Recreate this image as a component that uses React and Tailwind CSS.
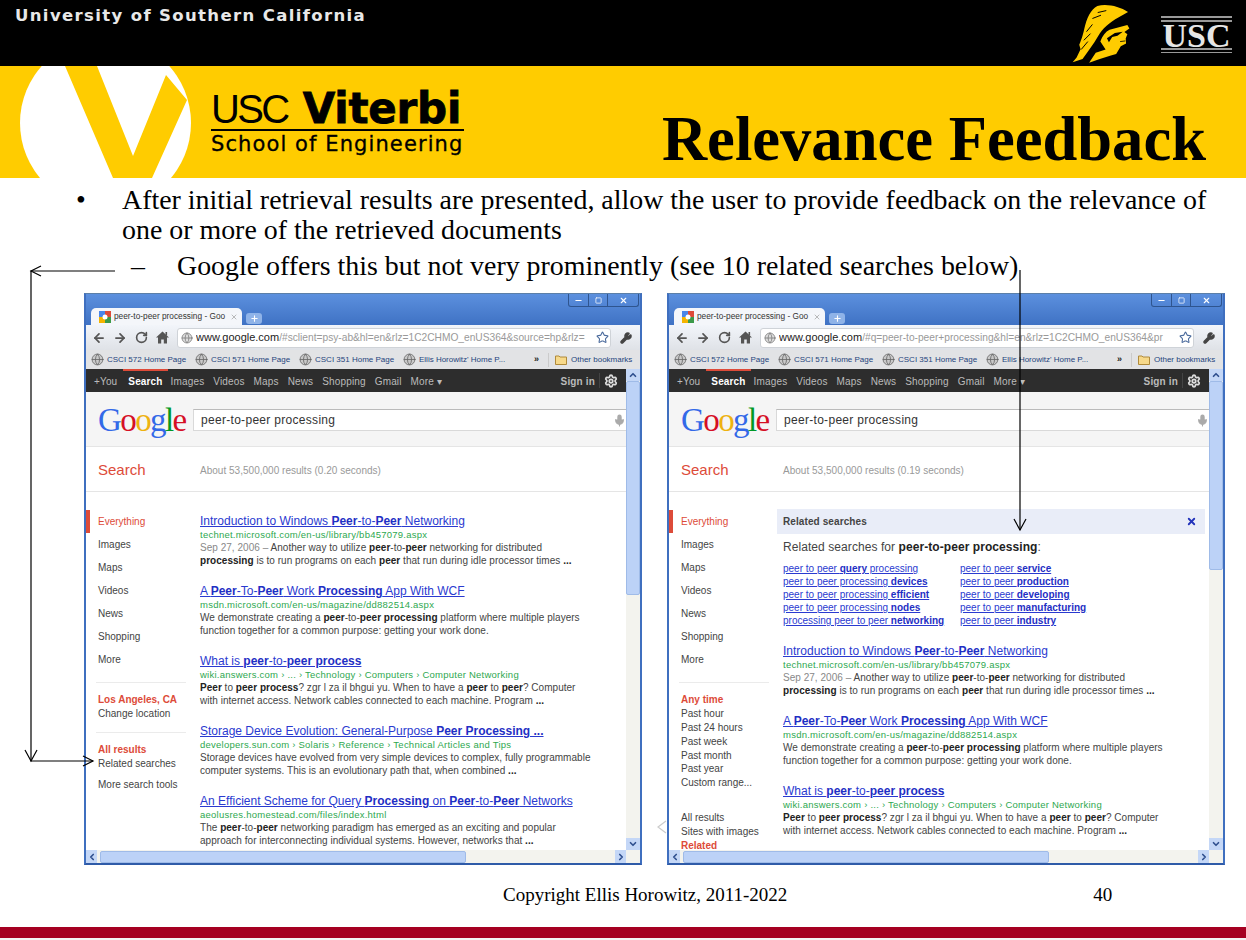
import { ArrowLeft, ArrowRight, RotateCw, Star, Wrench, Settings, Mic, ChevronLeft, ChevronRight, ChevronUp, ChevronDown, X, Minus, Plus, Square, Globe } from 'lucide-react'

function B({ children, c = 'text-[#222]' }) {
    return <b className={`font-bold ${c}`}>{children}</b>
}

function T({ children }) {
    return <b className="font-bold text-[#1f2fc4]">{children}</b>
}

function Result({ title, url, date, line1, line2 }) {
    return (
        <div className="mb-[17px] w-[420px] whitespace-nowrap">
            <div className="h-[14px] text-[12px] leading-[14px] text-[#2a3ad0] underline">{title}</div>
            <div className="h-[13px] text-[9.5px] leading-[13px] tracking-[0.24px] text-[#2ea84f]">{url}</div>
            <div className="h-[13px] text-[10px] leading-[13px] tracking-[0.03px] text-[#444]">
                {date && <span className="text-[#888]">{date} – </span>}
                {line1}
            </div>
            <div className="h-[13px] text-[10px] leading-[13px] tracking-[0.03px] text-[#444]">{line2}</div>
        </div>
    )
}

const intro = (
    <Result
        title={<>Introduction to Windows <T>Peer</T>-to-<T>Peer</T> Networking</>}
        url="technet.microsoft.com/en-us/library/bb457079.aspx"
        date="Sep 27, 2006"
        line1={<>Another way to utilize <B>peer</B>-to-<B>peer</B> networking for distributed</>}
        line2={<><B>processing</B> is to run programs on each <B>peer</B> that run during idle processor times <B>...</B></>}
    />
)

const wcf = (
    <Result
        title={<>A <T>Peer</T>-To-<T>Peer</T> Work <T>Processing</T> App With WCF</>}
        url="msdn.microsoft.com/en-us/magazine/dd882514.aspx"
        line1={<>We demonstrate creating a <B>peer</B>-to-<B>peer processing</B> platform where multiple players</>}
        line2="function together for a common purpose: getting your work done."
    />
)

const whatIs = (
    <Result
        title={<>What is <T>peer</T>-to-<T>peer process</T></>}
        url="wiki.answers.com › ... › Technology › Computers › Computer Networking"
        line1={<><B>Peer</B> to <B>peer process</B>? zgr l za il bhgui yu. When to have a <B>peer</B> to <B>peer</B>? Computer</>}
        line2={<>with internet access. Network cables connected to each machine. Program <B>...</B></>}
    />
)

function NavItem({ children, active }) {
    return (
        <div className={`h-[23px] text-[10px] leading-[23px] ${active ? 'border-l-4 border-[#dd4b39] pl-[8px] text-[#dd4b39]' : 'pl-[12px] text-[#444]'}`}>
            {children}
        </div>
    )
}

function Side({ children, red, className = '' }) {
    return (
        <div className={`h-[13.9px] pl-[12px] text-[10px] leading-[14px] whitespace-nowrap ${red ? 'font-bold text-[#dd4b39]' : 'text-[#444]'} ${className}`}>
            {children}
        </div>
    )
}

function Divider() {
    return <div className="mt-[11px] mb-[10px] ml-[10px] h-px w-[90px] bg-[#ebebeb]" />
}

function Bookmark({ label, className }) {
    return (
        <div className={`flex items-center gap-[3px] whitespace-nowrap ${className}`}>
            <Globe size={13} className="shrink-0 text-[#666]" fill="#c9c9c9" strokeWidth={1.5} />
            <span>{label}</span>
        </div>
    )
}

function Browser({ url, rest, time, sidebar, thumb, children }) {
    return (
        <div className="flex h-[572px] w-[558px] flex-col border-x-2 border-b-2 border-t border-x-[#3f6fbf] border-b-[#2f5ba8] border-t-[#5b7fa8] bg-white">
            <div className="flex h-[31px] shrink-0 flex-col bg-gradient-to-b from-[#5c90de] to-[#3f72c4]">
                <div className="flex h-[13px] justify-end pr-[1px]">
                    <div className="flex h-[13px] w-[71px] rounded-b-[3px] border-x border-b border-[#2f558f] text-white">
                        <div className="flex w-[20px] items-center justify-center border-r border-[#2f558f]"><Minus size={9} strokeWidth={3} /></div>
                        <div className="flex w-[19px] items-center justify-center border-r border-[#2f558f]"><Square size={7} strokeWidth={2.5} /></div>
                        <div className="flex flex-1 items-center justify-center"><X size={9} strokeWidth={3} /></div>
                    </div>
                </div>
                <div className="flex h-[18px] items-end pl-[5px]">
                    <div className="flex h-[17px] w-[151px] items-center gap-[3px] rounded-t-[5px] bg-[#f4f6fa] pl-[8px] pr-[4px] text-[8.3px] whitespace-nowrap text-[#333]">
                        <svg width="12" height="12" viewBox="0 0 12 12" className="shrink-0">
                            <rect width="6" height="6" fill="#4a86e8" />
                            <rect x="6" width="6" height="6" fill="#dd4b39" />
                            <rect y="6" width="6" height="6" fill="#f4b400" />
                            <rect x="6" y="6" width="6" height="6" fill="#3c9a4a" />
                            <circle cx="6" cy="6" r="2.5" fill="#fff" />
                        </svg>
                        <span className="flex-1">peer-to-peer processing - Goo</span>
                        <X size={8} className="shrink-0 text-[#999]" />
                    </div>
                    <div className="mb-[1px] ml-[4px] flex h-[11px] w-[16px] items-center justify-center rounded-[3px] bg-[#8fb3e8] text-white">
                        <Plus size={9} strokeWidth={3} />
                    </div>
                </div>
            </div>

            <div className="flex h-[25px] shrink-0 items-center bg-gradient-to-b from-[#f2f5fa] to-[#dfe2e7] pl-[6px] text-[#555]">
                <ArrowLeft size={14} strokeWidth={3} />
                <ArrowRight size={14} strokeWidth={3} className="ml-[7px]" />
                <RotateCw size={13} strokeWidth={3} className="ml-[8px]" />
                <svg width="13" height="13" viewBox="0 0 13 13" className="ml-[8px] shrink-0" fill="#555">
                    <path d="M6.5 0.5 L13 6.5 L11 6.5 L11 12.5 L7.8 12.5 L7.8 8.5 L5.2 8.5 L5.2 12.5 L2 12.5 L2 6.5 L0 6.5 Z" />
                    <rect x="9.5" y="1" width="1.6" height="3.5" />
                </svg>
                <div className="ml-[8px] flex h-[20px] w-[434px] items-center rounded-[3px] border border-[#cfd3d8] bg-white pl-[3px] pr-[1px]">
                    <Globe size={12} className="shrink-0 text-[#777]" fill="#ddd" strokeWidth={1.5} />
                    <div className="ml-[3px] flex-1 overflow-hidden text-[10.2px] whitespace-nowrap text-[#999]">
                        <span className="text-[11px] text-[#222]">{url}</span>{rest}
                    </div>
                    <Star size={13} className="shrink-0 text-[#4a6a9c]" strokeWidth={2} />
                </div>
                <Wrench size={12} strokeWidth={3} fill="#444" className="ml-[9px] text-[#444]" />
            </div>

            <div className="flex h-[19px] shrink-0 items-center bg-[#e2e3e5] text-[8px] text-[#24437c]">
                <Bookmark label="CSCI 572 Home Page" className="ml-[5px] w-[104px]" />
                <Bookmark label="CSCI 571 Home Page" className="w-[104px]" />
                <Bookmark label="CSCI 351 Home Page" className="w-[104px]" />
                <Bookmark label="Ellis Horowitz' Home P..." className="w-[131px]" />
                <span className="w-[11px] text-[9px] font-bold text-[#222]">»</span>
                <div className="mr-[6px] ml-[3px] h-[14px] w-px bg-[#cbcbcb]" />
                <svg width="12" height="11" viewBox="0 0 12 11" className="shrink-0">
                    <path d="M0.5 2 L4 2 L5 3 L11.5 3 L11.5 10.5 L0.5 10.5 Z" fill="#f7d98a" stroke="#b08a3a" />
                </svg>
                <span className="ml-[4px] whitespace-nowrap">Other bookmarks</span>
            </div>

            <div className="flex min-h-0 flex-1">
                <div className="flex min-w-0 flex-1 flex-col">
                    <div className="flex h-[23px] shrink-0 items-center bg-[#2d2d2d] pl-[8px] text-[10px] tracking-[0.15px] whitespace-nowrap text-[#bbb]">
                        <span className="pt-[2px]">+You</span>
                        <span className="ml-[6px] flex h-[23px] items-center border-t-2 border-[#dd4b39] px-[5px] font-bold text-white">Search</span>
                        <span className="ml-[3px] pt-[2px]">Images</span>
                        <span className="ml-[9px] pt-[2px]">Videos</span>
                        <span className="ml-[9px] pt-[2px]">Maps</span>
                        <span className="ml-[9px] pt-[2px]">News</span>
                        <span className="ml-[9px] pt-[2px]">Shopping</span>
                        <span className="ml-[9px] pt-[2px]">Gmail</span>
                        <span className="ml-[9px] pt-[2px]">More ▾</span>
                        <span className="ml-auto pt-[2px] font-bold">Sign in</span>
                        <div className="mx-[4px] h-[15px] w-px bg-[#444]" />
                        <Settings size={14} strokeWidth={3} className="mr-[8px] text-[#ddd]" />
                    </div>

                    <div className="flex h-[55px] shrink-0 items-center border-b border-[#e5e5e5] bg-[#f5f5f5] pt-[2px] pl-[12px]">
                        <div className="w-[95px] font-['Liberation_Serif',serif] text-[33px] leading-none tracking-[-1.6px]">
                            <span className="text-[#3369e8]">G</span>
                            <span className="text-[#d50f25]">o</span>
                            <span className="text-[#eeb211]">o</span>
                            <span className="text-[#3369e8]">g</span>
                            <span className="text-[#009925]">l</span>
                            <span className="text-[#d50f25]">e</span>
                        </div>
                        <div className="flex h-[22px] flex-1 items-center justify-between border-y border-l border-[#d9d9d9] border-t-[#bbb] bg-white pl-[7px] text-[12px] tracking-[0.3px] text-[#333]">
                            peer-to-peer processing
                            <Mic size={13} fill="#aaa" className="text-[#aaa]" />
                        </div>
                    </div>

                    <div className="flex h-[45px] shrink-0 items-center border-b border-[#e5e5e5] pt-[2px] pl-[12px]">
                        <span className="w-[102px] text-[15px] text-[#dd4b39]">Search</span>
                        <span className="text-[10px] tracking-[0.02px] text-[#999]">About 53,500,000 results ({time} seconds)</span>
                    </div>

                    <div className="flex min-h-0 flex-1 overflow-hidden">
                        <div className="w-[114px] shrink-0 pt-[18px]">{sidebar}</div>
                        <div className="min-w-0 flex-1 pt-[22px]">{children}</div>
                    </div>

                    <div className="flex h-[13px] shrink-0 items-center bg-[#f3f3ee]">
                        <div className="flex h-[13px] w-[11px] items-center justify-center bg-[#c4d7f7] text-[#2f4f8f]"><ChevronLeft size={10} strokeWidth={4} /></div>
                        <div className="ml-[3px] h-[12px] w-[366px] rounded-[2px] border border-[#9fbbe8] bg-[#bcd2f7]" />
                        <div className="ml-auto flex h-[13px] w-[11px] items-center justify-center bg-[#c4d7f7] text-[#2f4f8f]"><ChevronRight size={10} strokeWidth={4} /></div>
                    </div>
                </div>

                <div className="flex w-[14px] shrink-0 flex-col bg-[#f3f3ee]">
                    <div className="flex h-[12px] items-center justify-center bg-[#c4d7f7] text-[#2f4f8f]"><ChevronUp size={10} strokeWidth={4} /></div>
                    <div className={`rounded-[2px] border border-[#9fbbe8] bg-[#bcd2f7] ${thumb}`} />
                    <div className="mt-auto mb-[13px] flex h-[12px] items-center justify-center bg-[#c4d7f7] text-[#2f4f8f]"><ChevronDown size={10} strokeWidth={4} /></div>
                </div>
            </div>
        </div>
    )
}

function NavList() {
    return (
        <>
            <NavItem active>Everything</NavItem>
            <NavItem>Images</NavItem>
            <NavItem>Maps</NavItem>
            <NavItem>Videos</NavItem>
            <NavItem>News</NavItem>
            <NavItem>Shopping</NavItem>
            <NavItem>More</NavItem>
            <Divider />
        </>
    )
}

function RelatedLink({ children }) {
    return <div className="h-[13px] text-[10px] leading-[13px] whitespace-nowrap text-[#2a3ad0] underline">{children}</div>
}

function RelatedBox() {
    return (
        <div className="-mt-[5px] mb-[17px] -ml-[6px] w-[428px]">
            <div className="flex h-[25px] items-center justify-between bg-[#e9edf8] pr-[8px] pl-[6px] text-[10px] font-bold tracking-[0.1px] text-[#444]">
                Related searches
                <X size={11} strokeWidth={4} className="text-[#2233bb]" />
            </div>
            <div className="mt-[5px] h-[16px] pl-[6px] text-[12px] leading-[16px] tracking-[0.07px] text-[#444]">
                Related searches for <B>peer-to-peer processing</B>:
            </div>
            <div className="mt-[7px] flex pl-[6px]">
                <div className="w-[177px]">
                    <RelatedLink>peer to peer <T>query</T> processing</RelatedLink>
                    <RelatedLink>peer to peer processing <T>devices</T></RelatedLink>
                    <RelatedLink>peer to peer processing <T>efficient</T></RelatedLink>
                    <RelatedLink>peer to peer processing <T>nodes</T></RelatedLink>
                    <RelatedLink>processing peer to peer <T>networking</T></RelatedLink>
                </div>
                <div>
                    <RelatedLink>peer to peer <T>service</T></RelatedLink>
                    <RelatedLink>peer to peer <T>production</T></RelatedLink>
                    <RelatedLink>peer to peer <T>developing</T></RelatedLink>
                    <RelatedLink>peer to peer <T>manufacturing</T></RelatedLink>
                    <RelatedLink>peer to peer <T>industry</T></RelatedLink>
                </div>
            </div>
        </div>
    )
}

function TrojanLogo() {
    return (
        <svg width="59" height="60" viewBox="220 5 175 182">
            <path fill="#ffcc00" d="M388 32 C362 16 325 6 295 14 C275 24 262 52 255 85 C250 108 243 125 240 132 L244 145 L232 170 L220 185 L250 175 L268 150 L286 124 L298 104 C310 84 330 64 360 48 Z" />
            <path fill="none" stroke="#000" strokeWidth="3" d="M262 92 L280 70 M254 118 L274 98 M246 146 L266 122 M296 34 L322 28 M280 52 L306 42" />
            <path fill="#ffcc00" d="M304 122 C310 104 320 92 332 86 L386 72 L392 82 L377 93 L386 100 L381 112 L382 128 L366 136 L352 160 L336 164 L300 176 L270 186 L290 156 L320 146 Z" />
            <path fill="#000" d="M324 112 L348 96 L372 92 L356 104 L340 108 L330 124 Z" />
            <path fill="none" stroke="#000" strokeWidth="2.5" d="M364 122 L380 120" />
        </svg>
    )
}

function UscLogo() {
    return (
        <div className="flex h-[37px] w-[71px] flex-col justify-between">
            <div className="flex h-[6px] flex-col justify-between">
                <div className="h-[2px] bg-[#999]" />
                <div className="h-[2px] bg-[#999]" />
            </div>
            <div className="text-center font-['Liberation_Serif',serif] text-[34px] leading-[23px] font-bold text-[#e6e6e6]">USC</div>
            <div className="flex h-[5px] flex-col justify-between">
                <div className="h-[2px] bg-[#999]" />
                <div className="h-px bg-[#999]" />
            </div>
        </div>
    )
}

export default function App() {
    return (
        <div className="relative h-[940px] w-[1246px] overflow-hidden bg-white font-['Liberation_Sans',Arial,sans-serif]">
            <div className="flex h-[66px] items-start justify-between bg-black pt-px">
                <div className="pt-[6px] pl-[15px] font-['DejaVu_Sans',sans-serif] text-[16.5px] leading-[18px] font-bold tracking-[1.36px] text-[#e8e8e8]">
                    University of Southern California
                </div>
                <div className="flex items-start pt-[2px] pr-[14px]">
                    <TrojanLogo />
                    <div className="mt-[13px] ml-[30px]"><UscLogo /></div>
                </div>
            </div>

            <div className="relative flex h-[112px] overflow-hidden bg-[#ffcc00]">
                <svg width="200" height="112" viewBox="0 66 200 112" className="shrink-0">
                    <circle cx="105.5" cy="123" r="85.5" fill="#fff" />
                    <polygon fill="#ffcc00" points="65,66 97,66 133,156 166,75 187,100 152,178 113,178" />
                </svg>
                <div className="mt-[24px] ml-[11px] w-[253px] whitespace-nowrap text-black">
                    <div className="flex h-[41px] items-end border-b-2 border-black pb-[3px] leading-[34px]">
                        <span className="font-['Liberation_Sans',sans-serif] text-[40px] font-light tracking-[-2.6px]">USC</span>
                        <span className="ml-[15px] font-['DejaVu_Sans',sans-serif] text-[42px] font-bold tracking-[-0.2px] [-webkit-text-stroke:0.8px_black]">Viterbi</span>
                    </div>
                    <div className="mt-[1px] font-['DejaVu_Sans',sans-serif] text-[21px] leading-[24px] tracking-[1.1px] [-webkit-text-stroke:0.3px_black]">School of Engineering</div>
                </div>
                <div className="ml-auto pt-[38px] pr-[40px] font-['Liberation_Serif',serif] text-[62.6px] leading-[70px] font-bold whitespace-nowrap text-black">
                    Relevance Feedback
                </div>
            </div>

            <div className="h-[115px] font-['Liberation_Serif',serif] text-black">
                <div className="flex pt-[7px] pl-[76px] text-[27.9px] leading-[30px]">
                    <span className="w-[46px] shrink-0">•</span>
                    <p className="w-[1100px]">After initial retrieval results are presented, allow the user to provide feedback on the relevance of one or more of the retrieved documents</p>
                </div>
                <div className="flex pt-[6px] pl-[131px] text-[27.9px] leading-[30px]">
                    <span className="w-[46px] shrink-0">–</span>
                    <p>Google offers this but not very prominently (see 10 related searches below)</p>
                </div>
            </div>

            <div className="flex gap-[25px] pl-[84px]">
                <Browser
                    url="www.google.com"
                    rest="/#sclient=psy-ab&hl=en&rlz=1C2CHMO_enUS364&source=hp&rlz="
                    time="0.20"
                    thumb="h-[214px]"
                    sidebar={
                        <>
                            <NavList />
                            <Side red>Los Angeles, CA</Side>
                            <Side>Change location</Side>
                            <Divider />
                            <Side red>All results</Side>
                            <Side>Related searches</Side>
                            <Side className="mt-[7px]">More search tools</Side>
                        </>
                    }
                >
                    {intro}
                    {wcf}
                    {whatIs}
                    <Result
                        title={<>Storage Device Evolution: General-Purpose <T>Peer Processing ...</T></>}
                        url="developers.sun.com › Solaris › Reference › Technical Articles and Tips"
                        line1="Storage devices have evolved from very simple devices to complex, fully programmable"
                        line2={<>computer systems. This is an evolutionary path that, when combined <B>...</B></>}
                    />
                    <Result
                        title={<>An Efficient Scheme for Query <T>Processing</T> on <T>Peer</T>-to-<T>Peer</T> Networks</>}
                        url="aeolusres.homestead.com/files/index.html"
                        line1={<>The <B>peer</B>-to-<B>peer</B> networking paradigm has emerged as an exciting and popular</>}
                        line2={<>approach for interconnecting individual systems. However, networks that <B>...</B></>}
                    />
                </Browser>
                <Browser
                    url="www.google.com"
                    rest="/#q=peer-to-peer+processing&hl=en&rlz=1C2CHMO_enUS364&pr"
                    time="0.19"
                    thumb="h-[189px]"
                    sidebar={
                        <>
                            <NavList />
                            <Side red>Any time</Side>
                            <Side>Past hour</Side>
                            <Side>Past 24 hours</Side>
                            <Side>Past week</Side>
                            <Side>Past month</Side>
                            <Side>Past year</Side>
                            <Side>Custom range...</Side>
                            <Side className="mt-[21px]">All results</Side>
                            <Side>Sites with images</Side>
                            <Side red>Related</Side>
                        </>
                    }
                >
                    <RelatedBox />
                    {intro}
                    {wcf}
                    {whatIs}
                </Browser>
            </div>

            <div className="flex h-[62px] pt-[20px] font-['Liberation_Serif',serif] text-[19px] leading-[20px] text-black">
                <span className="ml-[503px]">Copyright Ellis Horowitz, 2011-2022</span>
                <span className="ml-[306px]">40</span>
            </div>
            <div className="h-[11px] bg-[#a50021]" />
            <div className="h-[2px] bg-[#f3f3f3]" />

            <svg width="1246" height="940" className="pointer-events-none absolute top-0 left-0" fill="none" stroke="#000" strokeWidth="1.2">
                <path d="M115 271 H31 V761 H93" />
                <path d="M41 266 L31 271 L41 276" />
                <path d="M25 750 L31 761 L37 750" />
                <path d="M83 756 L93 761 L83 766" />
                <path d="M1020 270 V530" />
                <path d="M1014 519 L1020 530 L1026 519" />
                <path d="M666 821 L658 827 L666 833" stroke="#ccc" />
            </svg>
        </div>
    )
}
